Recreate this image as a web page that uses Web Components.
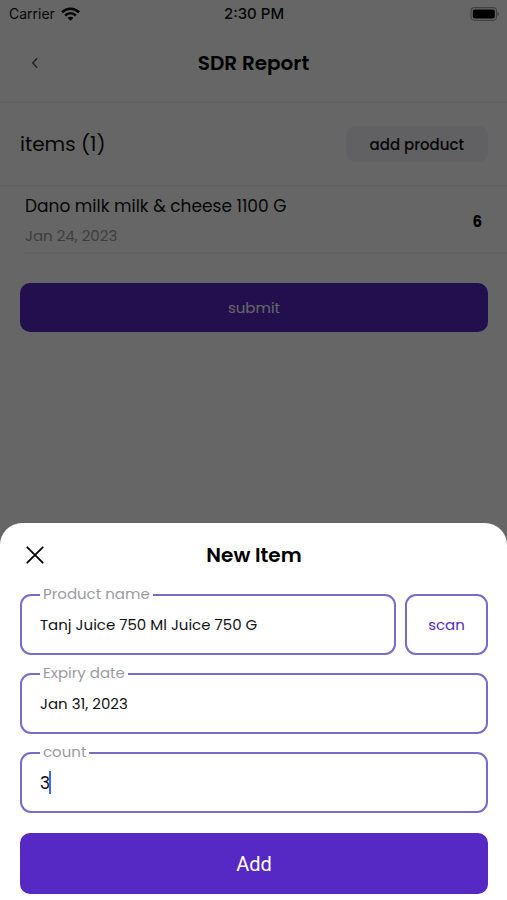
<!DOCTYPE html>
<html lang="en">
<head>
<meta charset="utf-8">
<meta name="viewport" content="width=device-width, initial-scale=1">
<title>SDR Report</title>
<style>
  html, body {
    margin: 0;
    height: 100%;
  }

  body {
    --primary: #5628c4;
    --outline: #7c69cc;
    --muted: #9b9ba3;
    --line: #f6f6f8;
    font-family: Poppins, Inter, "Open Sans", sans-serif;
    font-size: 15px;
    color: #111;
    background: #fff;
  }
</style>
</head>
<body>
<report-screen>
  <status-bar slot="status" carrier="Carrier" time="2:30 PM"></status-bar>
  <screen-header slot="header">SDR Report</screen-header>
  <items-toolbar slot="toolbar" count="1"></items-toolbar>
  <report-item count="6">
    Dano milk milk &amp; cheese 1100 G
    <span slot="date">Jan 24, 2023</span>
  </report-item>
  <primary-button slot="footer">submit</primary-button>

  <bottom-sheet slot="sheet" heading="New Item">
    <field-row>
      <outlined-field label="Product name" value="Tanj Juice 750 Ml Juice 750 G"></outlined-field>
      <outline-button>scan</outline-button>
    </field-row>
    <outlined-field label="Expiry date" value="Jan 31, 2023"></outlined-field>
    <outlined-field label="count" value="3" active></outlined-field>
    <primary-button slot="action" size="large">Add</primary-button>
  </bottom-sheet>
</report-screen>

<script>
  class BaseElement extends HTMLElement {
    constructor() {
      super();
      this.attachShadow({ mode: 'open' });
    }

    connectedCallback() {
      this.shadowRoot.innerHTML = `
        <style>
          :host, *, *::before, *::after { box-sizing: border-box; }
          button, input { font: inherit; color: inherit; margin: 0; }
          button { cursor: pointer; }
          ${this.styles()}
        </style>
        ${this.template()}
      `;
    }

    attr(name) {
      return this.getAttribute(name) || '';
    }
  }

  class ReportScreen extends BaseElement {
    styles() {
      return `
        :host { display: block; min-height: 100%; }
        .footer { padding: 29px 19px 29px 20px; }
        .backdrop {
          position: fixed;
          inset: 0;
          display: flex;
          flex-direction: column;
          justify-content: flex-end;
          background: rgba(0, 0, 0, 0.6);
        }
      `;
    }

    template() {
      return `
        <slot name="status"></slot>
        <slot name="header"></slot>
        <main>
          <slot name="toolbar"></slot>
          <slot></slot>
          <div class="footer"><slot name="footer"></slot></div>
        </main>
        <div class="backdrop"><slot name="sheet"></slot></div>
      `;
    }
  }

  class StatusBar extends BaseElement {
    styles() {
      return `
        :host {
          display: grid;
          grid-template-columns: 1fr auto 1fr;
          align-items: center;
          height: 27px;
          padding: 0 8px 0 9px;
          font-family: Inter, sans-serif;
          font-size: 14px;
        }
        .carrier { display: flex; align-items: center; gap: 6px; }
        .time { font-weight: 500; font-size: 15px; }
        .battery { justify-self: end; }
        svg { display: block; }
      `;
    }

    template() {
      return `
        <div class="carrier">
          <span>${this.attr('carrier')}</span>
          <svg width="19" height="14" viewBox="0 0 19 14" fill="none" stroke="#000" stroke-width="2.6">
            <path d="M1 5.2C5.8 .5 13.2 .5 18 5.2"/>
            <path d="M4.2 8.5C7.3 5.5 11.7 5.5 14.8 8.5"/>
            <path d="M6.7 10.9C8.3 9.3 10.7 9.3 12.3 10.9L9.5 13.8Z" fill="#000" stroke="none"/>
          </svg>
        </div>
        <span class="time">${this.attr('time')}</span>
        <svg class="battery" width="29" height="14" viewBox="1 0 29 14">
          <rect x="2" y=".7" width="25.5" height="12.6" rx="3.5" fill="none" stroke="#000" stroke-opacity=".35" stroke-width="1.2"/>
          <rect x="3.8" y="2.5" width="22" height="9" rx="2" fill="#000"/>
          <path d="M28.5 5v4c1-.4 1.4-1.2 1.4-2s-.4-1.6-1.4-2z" fill="#000" fill-opacity=".4"/>
        </svg>
      `;
    }
  }

  class ScreenHeader extends BaseElement {
    styles() {
      return `
        :host {
          display: grid;
          grid-template-columns: 30px 1fr 30px;
          align-items: center;
          height: 76px;
          padding: 0 20px 2px;
          border-bottom: 2px solid var(--line);
        }
        button { display: grid; place-items: center; height: 30px; padding: 0; border: 0; background: none; }
        h1 { margin: 0; font-size: 20px; font-weight: 600; text-align: center; color: #000; }
      `;
    }

    template() {
      return `
        <button type="button" aria-label="Back">
          <svg width="8" height="12" viewBox="0 0 8 12" fill="none" stroke="#555" stroke-width="1.4">
            <path d="M6.2 1.2L1.8 6l4.4 4.8"/>
          </svg>
        </button>
        <h1><slot></slot></h1>
      `;
    }
  }

  class ItemsToolbar extends BaseElement {
    styles() {
      return `
        :host {
          display: flex;
          align-items: center;
          justify-content: space-between;
          height: 84px;
          padding: 0 19px 0 20px;
          border-bottom: 2px solid var(--line);
        }
        h2 { margin: 0; font-size: 20px; font-weight: 400; }
        button {
          height: 36px;
          padding: 0 24px;
          border: 0;
          border-radius: 9px;
          background: #f3f3fa;
          font-weight: 500;
        }
      `;
    }

    template() {
      return `
        <h2>items (${this.attr('count')})</h2>
        <button type="button">add product</button>
      `;
    }
  }

  class ReportItem extends BaseElement {
    styles() {
      return `
        :host {
          display: flex;
          align-items: center;
          justify-content: space-between;
          height: 67px;
          margin-left: 25px;
          padding: 3px 25px 0 0;
          border-bottom: 2px solid var(--line);
        }
        .text { display: grid; gap: 6px; line-height: 24px; }
        .name { font-size: 17px; }
        .date { color: var(--muted); }
        .count { font-weight: 700; color: #000; }
      `;
    }

    template() {
      return `
        <div class="text">
          <div class="name"><slot></slot></div>
          <div class="date"><slot name="date"></slot></div>
        </div>
        <span class="count">${this.attr('count')}</span>
      `;
    }
  }

  class PrimaryButton extends BaseElement {
    styles() {
      return `
        :host { display: block; }
        button {
          width: 100%;
          height: 49px;
          border: 0;
          border-radius: 10px;
          background: var(--primary);
          color: #fff;
        }
        :host([size="large"]) button {
          height: 61px;
          font-family: Roboto, sans-serif;
          font-size: 20px;
        }
      `;
    }

    template() {
      return `<button type="button"><slot></slot></button>`;
    }
  }

  class OutlineButton extends BaseElement {
    styles() {
      return `
        :host { display: block; }
        button {
          width: 100%;
          height: 61px;
          border: 2px solid var(--outline);
          border-radius: 11px;
          background: #fff;
          color: var(--primary);
        }
      `;
    }

    template() {
      return `<button type="button"><slot></slot></button>`;
    }
  }

  class FieldRow extends BaseElement {
    styles() {
      return `
        :host { display: grid; grid-template-columns: 1fr 83px; gap: 9px; }
      `;
    }

    template() {
      return `<slot></slot>`;
    }
  }

  class OutlinedField extends BaseElement {
    styles() {
      return `
        :host { display: block; position: relative; }
        .box {
          display: flex;
          align-items: center;
          height: 61px;
          padding: 0 18px;
          border: 2px solid var(--outline);
          border-radius: 11px;
        }
        label {
          position: absolute;
          top: -10px;
          left: 20px;
          padding: 0 3px;
          line-height: 20px;
          background: #fff;
          color: var(--muted);
        }
        input { width: 100%; padding: 0; border: 0; outline: 0; background: none; }
        .caret { display: none; width: 2px; height: 23px; margin-left: -1px; background: #3f6ae0; }
        :host([active]) input { width: auto; field-sizing: content; font-size: 17px; }
        :host([active]) .caret { display: block; }
      `;
    }

    template() {
      return `
        <label for="field">${this.attr('label')}</label>
        <div class="box">
          <input id="field" type="text" value="${this.attr('value')}">
          <span class="caret"></span>
        </div>
      `;
    }
  }

  class BottomSheet extends BaseElement {
    styles() {
      return `
        :host {
          display: block;
          padding: 0 19px 6px 20px;
          border-radius: 22px 22px 0 0;
          background: #fff;
        }
        header {
          display: grid;
          grid-template-columns: 30px 1fr 30px;
          align-items: center;
          height: 71px;
          padding-bottom: 7px;
        }
        h2 { margin: 0; font-size: 20px; font-weight: 600; text-align: center; color: #000; }
        .close { display: grid; place-items: center; height: 30px; padding: 0; border: 0; background: none; }
        form { display: grid; gap: 18px; margin-bottom: 20px; }
      `;
    }

    template() {
      return `
        <header>
          <button class="close" type="button" aria-label="Close">
            <svg width="18" height="18" viewBox="0 0 18 18" fill="none" stroke="#000" stroke-width="1.8" stroke-linecap="round">
              <path d="M1.3 1.3l15.4 15.4M16.7 1.3L1.3 16.7"/>
            </svg>
          </button>
          <h2>${this.attr('heading')}</h2>
        </header>
        <form><slot></slot></form>
        <slot name="action"></slot>
      `;
    }
  }

  customElements.define('report-screen', ReportScreen);
  customElements.define('status-bar', StatusBar);
  customElements.define('screen-header', ScreenHeader);
  customElements.define('items-toolbar', ItemsToolbar);
  customElements.define('report-item', ReportItem);
  customElements.define('primary-button', PrimaryButton);
  customElements.define('outline-button', OutlineButton);
  customElements.define('field-row', FieldRow);
  customElements.define('outlined-field', OutlinedField);
  customElements.define('bottom-sheet', BottomSheet);
</script>
</body>
</html>
